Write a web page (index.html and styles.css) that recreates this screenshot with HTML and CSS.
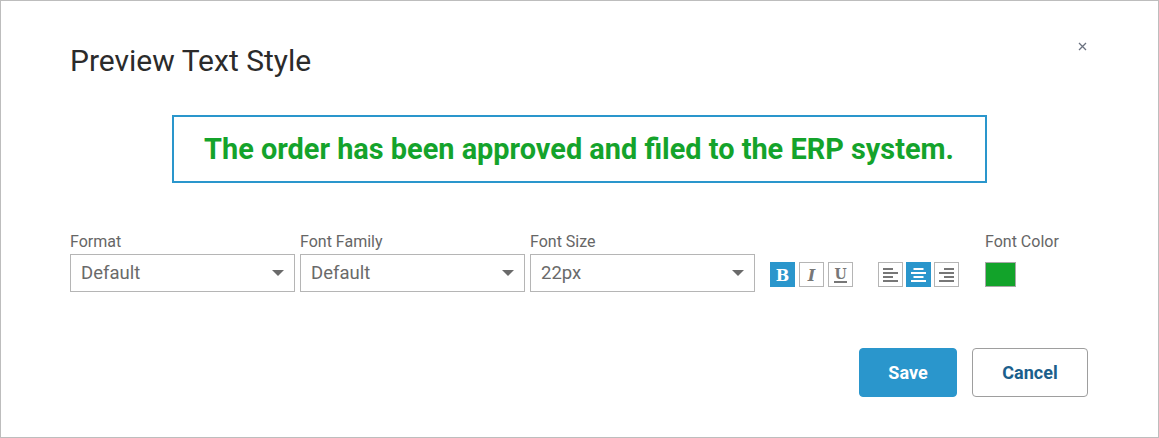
FILE: index.html
```html
<!DOCTYPE html>
<html>
<head>
<meta charset="utf-8">
<link rel="stylesheet" href="styles.css">
</head>
<body>
<div class="dialog">
  <button class="close" aria-label="Close">
    <svg width="9" height="9" viewBox="0 0 9 9"><path d="M1 1L8 8M8 1L1 8" stroke="#6b7280" stroke-width="1.3" fill="none"/></svg>
  </button>
  <h1 class="title">Preview Text Style</h1>
  <div class="preview">The order has been approved and filed to the ERP system.</div>
  <div class="toolbar">
    <div class="field">
      <label class="label">Format</label>
      <div class="select"><span>Default</span><span class="caret"></span></div>
    </div>
    <div class="field">
      <label class="label">Font Family</label>
      <div class="select"><span>Default</span><span class="caret"></span></div>
    </div>
    <div class="field">
      <label class="label">Font Size</label>
      <div class="select"><span>22px</span><span class="caret"></span></div>
    </div>
    <div class="btn-group styles">
      <button class="tb active">
        <svg width="25" height="25" viewBox="0 0 25 25"><text x="12.5" y="18.5" text-anchor="middle" font-family="DejaVu Serif, serif" font-weight="bold" font-size="16" fill="#fff">B</text></svg>
      </button>
      <button class="tb">
        <svg width="25" height="25" viewBox="0 0 25 25"><text x="12.5" y="18.5" text-anchor="middle" font-family="DejaVu Serif, serif" font-style="italic" font-weight="bold" font-size="16" fill="#777">I</text></svg>
      </button>
      <button class="tb">
        <svg width="25" height="25" viewBox="0 0 25 25"><text x="12.5" y="17" text-anchor="middle" font-family="DejaVu Serif, serif" font-weight="bold" font-size="14" fill="#777">U</text><rect x="6" y="19" width="13" height="2" fill="#777"/></svg>
      </button>
    </div>
    <div class="btn-group aligns">
      <button class="tb">
        <svg width="25" height="25" viewBox="0 0 25 25" fill="#777"><rect x="5" y="6" width="10" height="2"/><rect x="5" y="10" width="15" height="2"/><rect x="5" y="14" width="10" height="2"/><rect x="5" y="18" width="15" height="2"/></svg>
      </button>
      <button class="tb active">
        <svg width="25" height="25" viewBox="0 0 25 25" fill="#fff"><rect x="7.5" y="6" width="10" height="2"/><rect x="5" y="10" width="15" height="2"/><rect x="7.5" y="14" width="10" height="2"/><rect x="5" y="18" width="15" height="2"/></svg>
      </button>
      <button class="tb">
        <svg width="25" height="25" viewBox="0 0 25 25" fill="#777"><rect x="10" y="6" width="10" height="2"/><rect x="5" y="10" width="15" height="2"/><rect x="10" y="14" width="10" height="2"/><rect x="5" y="18" width="15" height="2"/></svg>
      </button>
    </div>
    <div class="field color-field">
      <label class="label">Font Color</label>
      <div class="swatch"></div>
    </div>
  </div>
  <div class="footer">
    <button class="btn primary">Save</button>
    <button class="btn secondary">Cancel</button>
  </div>
</div>
</body>
</html>
```
FILE: styles.css
```css
* { box-sizing: border-box; }
html, body { margin: 0; padding: 0; background: #fff; }
body { font-family: Roboto, "Liberation Sans", sans-serif; }

.dialog {
  position: relative;
  width: 1159px;
  height: 438px;
  border: 1px solid #bdbdbd;
  padding: 0 70px 0 69px;
  display: flex;
  flex-direction: column;
}

.close {
  position: absolute;
  top: 40px;
  left: 1076px;
  width: 11px;
  height: 11px;
  padding: 0;
  border: 0;
  background: none;
  display: flex;
  align-items: center;
  justify-content: center;
}

.title {
  margin: 40px 0 0 0;
  font-size: 30px;
  font-weight: 400;
  color: #2b2b2b;
  line-height: 40px;
}

.preview {
  align-self: center;
  margin-top: 34px;
  width: 815px;
  height: 68px;
  border: 2px solid #2a96cc;
  color: #14a32b;
  font-weight: 700;
  font-size: 28.9px;
  display: flex;
  align-items: center;
  justify-content: center;
}

.toolbar {
  margin-top: 49px;
  display: flex;
  align-items: flex-start;
  gap: 5px;
}

.field { display: flex; flex-direction: column; }

.label {
  font-size: 16px;
  color: #666;
  line-height: 20px;
  margin-bottom: 2px;
}

.select {
  width: 225px;
  height: 38px;
  border: 1px solid #b5b5b5;
  display: flex;
  align-items: center;
  justify-content: space-between;
  padding: 0 10px 0 10px;
  font-size: 18.5px;
  color: #6a6a6a;
}

.caret {
  width: 0;
  height: 0;
  border-left: 6px solid transparent;
  border-right: 6px solid transparent;
  border-top: 6px solid #6a6a6a;
}

.btn-group {
  display: flex;
  gap: 4px;
  margin-top: 30px;
}
.styles { margin-left: 10px; }
.aligns { margin-left: 20px; gap: 3px; }

.tb {
  width: 25px;
  height: 25px;
  padding: 0;
  border: 1px solid #b5b5b5;
  background: #fff;
  display: flex;
  align-items: center;
  justify-content: center;
}
.tb svg { display: block; margin: -1px; }
.tb.active { background: #2a96cc; border-color: #2a96cc; }

.color-field { margin-left: 21px; }
.color-field .label { margin-bottom: 10px; }

.swatch {
  width: 31px;
  height: 25px;
  background: #12a32a;
  border: 1px solid #a8a8a8;
}

.footer {
  margin-top: 56px;
  display: flex;
  justify-content: flex-end;
  gap: 15px;
}

.btn {
  height: 49px;
  border-radius: 4px;
  font-family: Roboto, "Liberation Sans", sans-serif;
  font-size: 18px;
  font-weight: 700;
}
.primary {
  width: 98px;
  background: #2a96cc;
  border: 1px solid #2a96cc;
  color: #fff;
}
.secondary {
  width: 116px;
  background: #fff;
  border: 1px solid #9e9e9e;
  color: #1b5f8c;
}
```
